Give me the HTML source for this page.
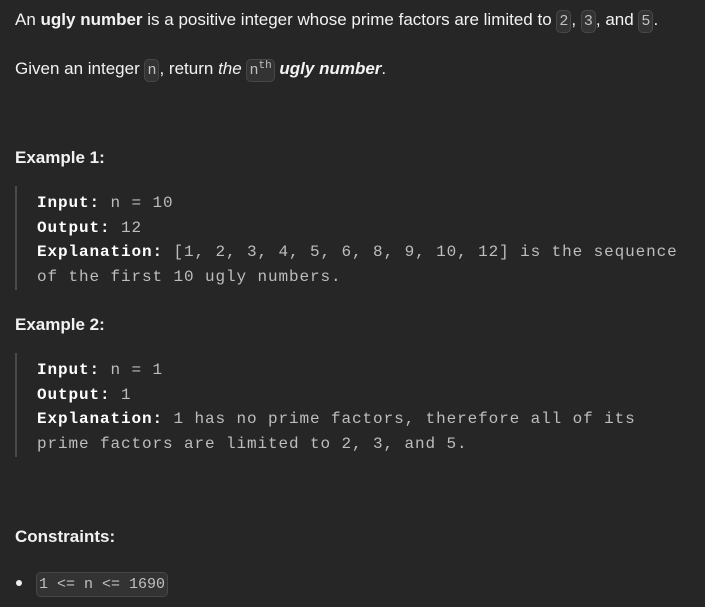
<!DOCTYPE html>
<html><head><style>
html,body{margin:0;padding:0;background:#262626;width:705px;height:607px;overflow:hidden}
body{font-family:"Liberation Sans",sans-serif;font-size:17px;color:#f2f2f2;position:relative}
.t{position:absolute;left:15px;white-space:nowrap;line-height:22px}
code{font-family:"Liberation Mono",monospace;font-size:15px;color:#c0c0c0;background:#333;border:1px solid #474747;border-radius:5px;padding:2px 2px}
.pre{position:absolute;left:15px;border-left:2px solid #4a4a4a;padding-left:20px;font-family:"Liberation Mono",monospace;font-size:16px;letter-spacing:0.9px;line-height:24.7px;color:#bdbdbd;white-space:pre}
.pre b{color:#fff}
.pre div{position:relative;top:5px}
</style></head><body>
<div class="t" style="top:9px">An <b>ugly number</b> is a positive integer whose prime factors are limited to <code>2</code>, <code>3</code>, and <code>5</code>.</div>
<div class="t" style="top:55px">Given an integer <code>n</code>, return <i>the</i> <code>n<sup style="font-size:11px">th</sup></code> <b><i>ugly number</i></b>.</div>
<div class="t" style="top:147px"><b>Example 1:</b></div>
<div class="pre" style="top:186px;height:104px"><div><b>Input:</b> n = 10
<b>Output:</b> 12
<b>Explanation:</b> [1, 2, 3, 4, 5, 6, 8, 9, 10, 12] is the sequence
of the first 10 ugly numbers.</div></div>
<div class="t" style="top:314px"><b>Example 2:</b></div>
<div class="pre" style="top:353px;height:104px"><div><b>Input:</b> n = 1
<b>Output:</b> 1
<b>Explanation:</b> 1 has no prime factors, therefore all of its
prime factors are limited to 2, 3, and 5.</div></div>
<div class="t" style="top:526px"><b>Constraints:</b></div>
<div class="t" style="top:572px;left:15px"><span style="display:inline-block;width:6px;height:6px;border-radius:50%;background:#eee;margin:0 14px 2px 1px;vertical-align:middle"></span><code style="padding:3px 2px">1 &lt;= n &lt;= 1690</code></div>
</body></html>
